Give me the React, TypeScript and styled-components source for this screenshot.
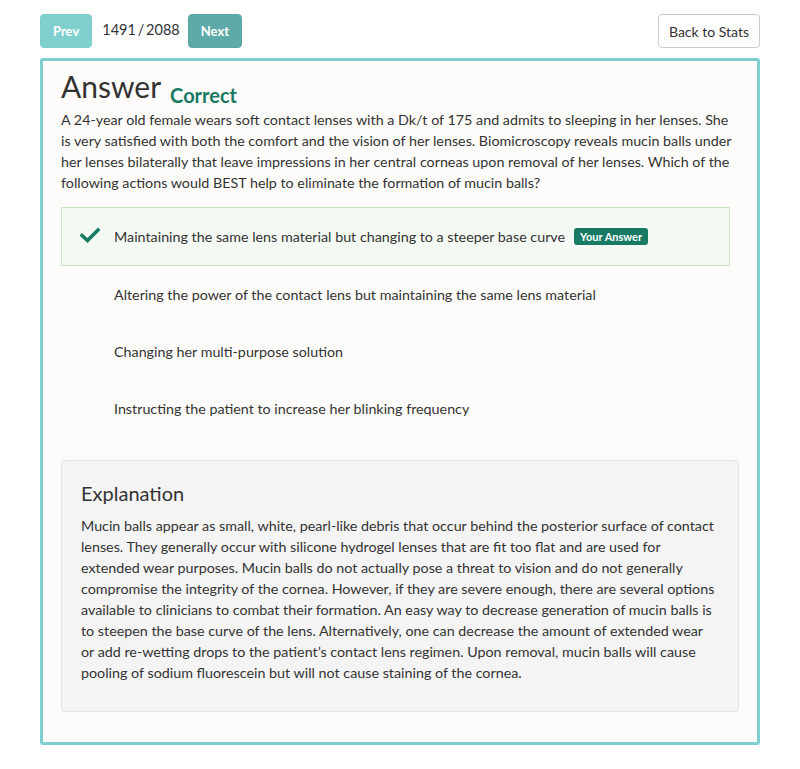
import React from "react";
import styled, { createGlobalStyle } from "styled-components";

const Global = createGlobalStyle`
  html, body { margin: 0; padding: 0; background: #ffffff; }
  body { font-family: Lato, "Open Sans", sans-serif; color: #333333; }
  * { box-sizing: border-box; }
`;

const Page = styled.div`
  width: 800px;
  padding: 14px 40px 24px 40px;
`;

const Toolbar = styled.div`
  display: flex;
  align-items: center;
  height: 34px;
`;

const NavButton = styled.button<{ $dim?: boolean }>`
  height: 34px;
  padding: 0 12px;
  border: 1px solid ${(p) => (p.$dim ? "#7bcdcc" : "#5aa8a6")};
  border-radius: 4px;
  background: ${(p) => (p.$dim ? "#80d0cf" : "#5eaaa8")};
  color: #ffffff;
  font-family: Lato, sans-serif;
  font-weight: 700;
  font-size: 13px;
`;

const Counter = styled.span`
  margin: 0 8px 0 10px;
  font-size: 14.5px;
  color: #333;
  position: relative;
  top: -2px;
`;

const Spacer = styled.div`
  flex: 1;
`;

const StatsButton = styled.button`
  height: 34px;
  padding: 0 10px;
  border: 1px solid #cccccc;
  border-radius: 4px;
  background: #ffffff;
  color: #333;
  font-family: Lato, sans-serif;
  font-size: 14px;
`;

const Card = styled.div`
  margin-top: 10px;
  border: 3px solid #7ecfcf;
  border-radius: 3px;
  background: #fdfcfa;
  padding: 8px 18px 30px 18px;
`;

const TitleRow = styled.div`
  display: flex;
  align-items: flex-end;
  gap: 9px;
  height: 34px;
`;

const Title = styled.h1`
  margin: 0;
  font-size: 30px;
  font-weight: 400;
  line-height: 34px;
  color: #333;
`;

const Verdict = styled.span`
  font-size: 20px;
  font-weight: 700;
  color: #177a63;
  line-height: 24px;
  position: relative;
  top: 4px;
`;

const Question = styled.p`
  margin: 6px 3px 14px 0;
  font-size: 14.3px;
  line-height: 21px;
  color: #333;
`;

const Options = styled.div`
  display: flex;
  flex-direction: column;
  margin-right: 9px;
`;

const Option = styled.div<{ $chosen?: boolean }>`
  display: flex;
  align-items: center;
  height: ${(p) => (p.$chosen ? "59px" : "57px")};
  padding: 0 18px;
  border: 1px solid ${(p) => (p.$chosen ? "#c8e6c3" : "transparent")};
  background: ${(p) => (p.$chosen ? "#f4faf3" : "transparent")};
  font-size: 14.3px;
  color: #333;
`;

const CheckBox = styled.span`
  width: 20px;
  margin-right: 14px;
  display: flex;
  align-items: center;
  position: relative;
  top: -2px;
`;

const Badge = styled.span`
  margin-left: 9px;
  padding: 2px 6px;
  border-radius: 3px;
  background: #177a63;
  color: #fff;
  font-size: 11px;
  font-weight: 700;
`;

const Explanation = styled.div`
  margin-top: 23px;
  min-height: 252px;
  border: 1px solid #e3e3e3;
  border-radius: 4px;
  background: #f4f4f4;
  padding: 18px 20px 20px 19px;
`;

const ExplTitle = styled.h2`
  margin: 0 0 8px 0;
  font-size: 20px;
  font-weight: 400;
  line-height: 28px;
  color: #333;
`;

const ExplText = styled.p`
  margin: 0;
  font-size: 14.3px;
  line-height: 21px;
  color: #333;
`;

const Check = ({ color }: { color: string }) => (
  <svg width="20" height="16" viewBox="0 0 20 16">
    <path d="M2 8.5 L7.5 13.5 L18 3" fill="none" stroke={color} strokeWidth="3.6" strokeLinecap="square" />
  </svg>
);

const options = [
  "Maintaining the same lens material but changing to a steeper base curve",
  "Altering the power of the contact lens but maintaining the same lens material",
  "Changing her multi-purpose solution",
  "Instructing the patient to increase her blinking frequency",
];

export default function App() {
  return (
    <>
      <Global />
      <Page>
        <Toolbar>
          <NavButton $dim>Prev</NavButton>
          <Counter>1491{"\u2009/\u2009"}2088</Counter>
          <NavButton>Next</NavButton>
          <Spacer />
          <StatsButton>Back to Stats</StatsButton>
        </Toolbar>
        <Card>
          <TitleRow>
            <Title>Answer</Title>
            <Verdict>Correct</Verdict>
          </TitleRow>
          <Question>
            A 24-year old female wears soft contact lenses with a Dk/t of 175 and admits to sleeping in her lenses. She is very satisfied with both the comfort and the vision of her lenses. Biomicroscopy reveals mucin balls under her lenses bilaterally that leave impressions in her central corneas upon removal of her lenses. Which of the following actions would BEST help to eliminate the formation of mucin balls?
          </Question>
          <Options>
            {options.map((o, i) => (
              <Option key={o} $chosen={i === 0}>
                <CheckBox>
                  <Check color={i === 0 ? "#177a63" : "#fafaf8"} />
                </CheckBox>
                {o}
                {i === 0 && <Badge>Your Answer</Badge>}
              </Option>
            ))}
          </Options>
          <Explanation>
            <ExplTitle>Explanation</ExplTitle>
            <ExplText>
              Mucin balls appear as small, white, pearl-like debris that occur behind the posterior surface of contact lenses. They generally occur with silicone hydrogel lenses that are fit too flat and are used for extended wear purposes. Mucin balls do not actually pose a threat to vision and do not generally compromise the integrity of the cornea. However, if they are severe enough, there are several options available to clinicians to combat their formation. An easy way to decrease generation of mucin balls is to steepen the base curve of the lens. Alternatively, one can decrease the amount of extended wear or add re-wetting drops to the patient’s contact lens regimen. Upon removal, mucin balls will cause pooling of sodium fluorescein but will not cause staining of the cornea.
            </ExplText>
          </Explanation>
        </Card>
      </Page>
    </>
  );
}
